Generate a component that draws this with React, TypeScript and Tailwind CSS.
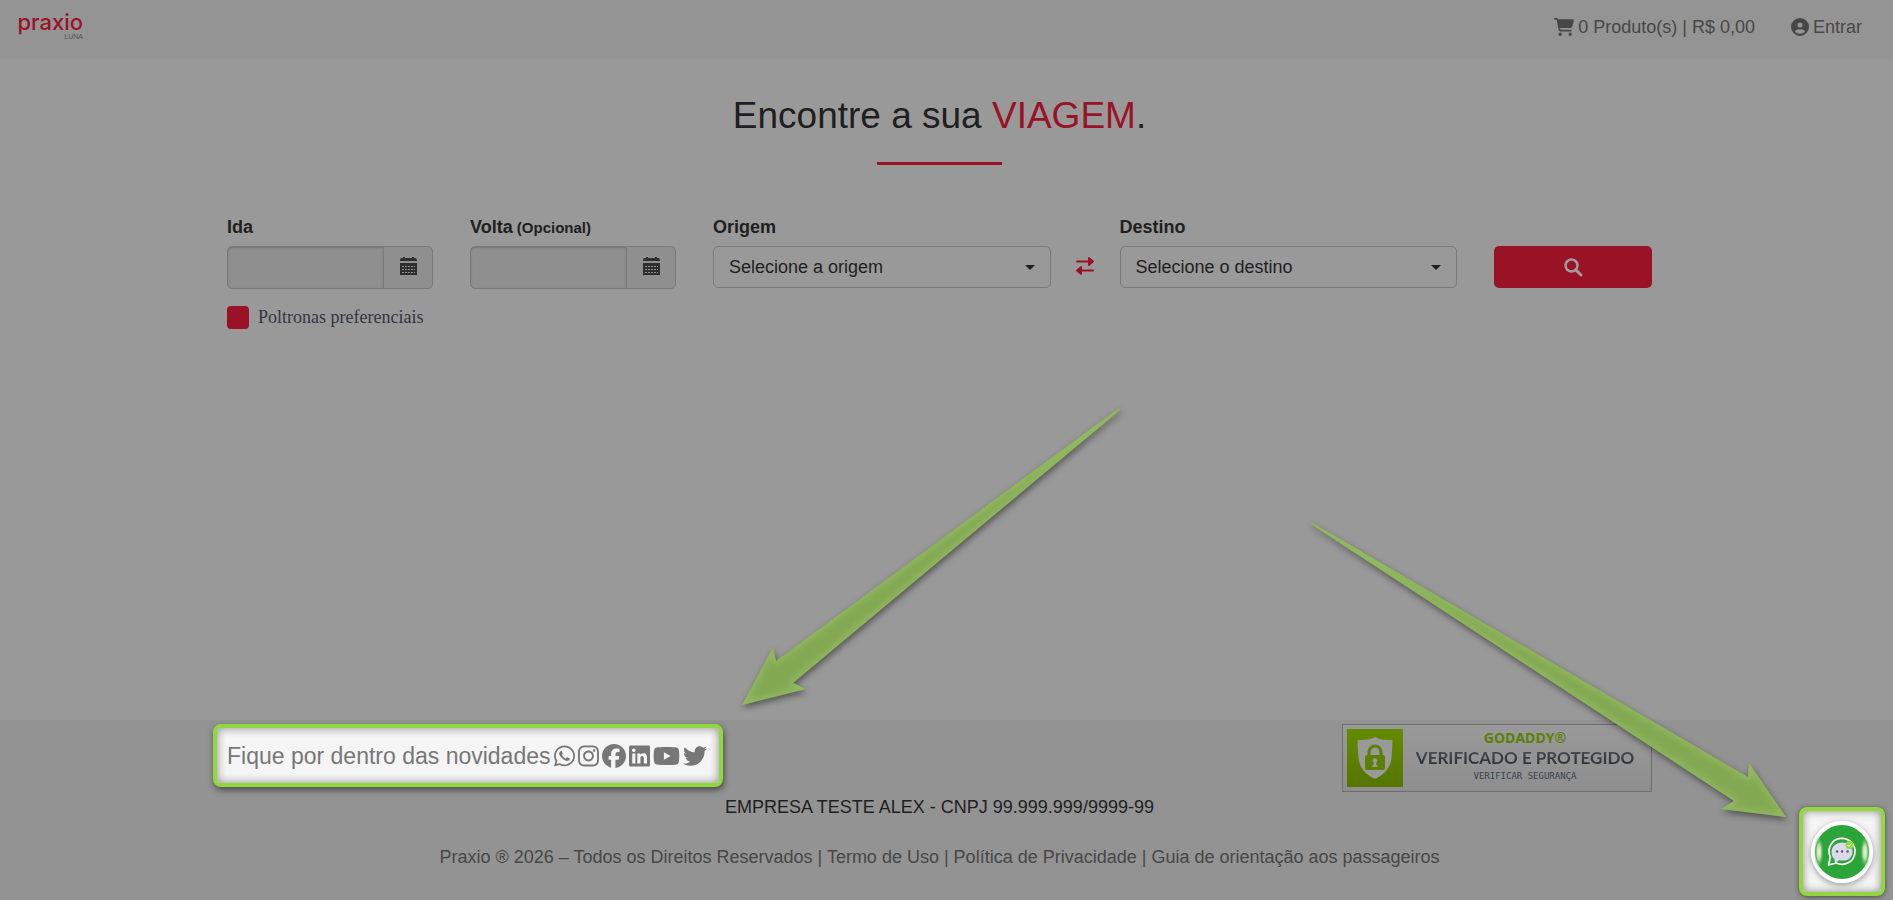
import clsx from "clsx";
import { FaCartShopping, FaCircleUser, FaFacebook, FaInstagram, FaLinkedin, FaTwitter, FaWhatsapp, FaYoutube } from "react-icons/fa6";

interface DateFieldProps {
    id: string;
    label: string;
    hint?: string;
}

interface SelectFieldProps {
    id: string;
    label: string;
    placeholder: string;
}

interface ArrowProps {
    id: string;
    points: string;
}

const labelStyle = "block text-lg leading-6 font-bold text-[#1f1f1f] mb-[7px]";

const socials = [
    { name: "WhatsApp", Icon: FaWhatsapp, size: "w-[21px]" },
    { name: "Instagram", Icon: FaInstagram, size: "w-[21px]" },
    { name: "Facebook", Icon: FaFacebook, size: "w-6" },
    { name: "LinkedIn", Icon: FaLinkedin, size: "w-[21px]" },
    { name: "YouTube", Icon: FaYoutube, size: "w-[27px]" },
    { name: "Twitter", Icon: FaTwitter, size: "w-6" },
];

const footerLinks = ["Termo de Uso", "Política de Privacidade", "Guia de orientação aos passageiros"];

const CalendarIcon = () => (
    <svg viewBox="0 0 17 18" className="w-[17px] h-[18px] fill-[#2e2e2e]" aria-hidden="true">
        <path d="M0 4V3a2 2 0 0 1 2-2h1V0h2v1h7V0h2v1h1a2 2 0 0 1 2 2v1z" />
        <path d="M0 6h17v12H0z" />
        <path
            d="M2 9.500h13M2 12.500h13M2 15.500h13"
            className="stroke-[#909090]"
            strokeWidth="1"
            strokeDasharray="2 1"
        />
    </svg>
);

const SwapIcon = () => (
    <svg viewBox="0 0 18 18" className="w-[18px] h-[18px] fill-[#9a1226]" aria-hidden="true">
        <path d="M1 3.500h11V1c0-.9.8-1.200 1.400-.7l4.200 3.500c.5.500.5 1 0 1.400l-4.200 3.500c-.6.500-1.400.2-1.400-.6V5.500H1a1 1 0 0 1 0-2z" />
        <path d="M17 12.500H6V10c0-.9-.8-1.200-1.400-.7L.4 12.800c-.5.500-.5 1 0 1.400l4.200 3.500c.6.500 1.400.2 1.400-.6v-2.600h11a1 1 0 0 0 0-2z" />
    </svg>
);

const DateField = ({ id, label, hint }: DateFieldProps) => {
    return (
        <div className="min-w-0">
            <label htmlFor={id} className={labelStyle}>
                {label}{hint && <span className="text-[15px] leading-none"> {hint}</span>}
            </label>
            <div className="flex h-[43px] rounded-[5px] border border-[#7a7a7a] bg-[#8f8f8f]">
                <input
                    id={id}
                    type="text"
                    readOnly
                    className="w-full min-w-0 flex-1 rounded-l px-3 text-lg outline-none shadow-[inset_0_1px_2px_#00000030]"
                />
                <button type="button" aria-label={`Abrir calendário: ${label}`} className="flex w-[49px] shrink-0 items-start justify-center border-l border-[#7a7a7a] pt-[10px]">
                    <CalendarIcon />
                </button>
            </div>
        </div>
    )
}

const SelectField = ({ id, label, placeholder }: SelectFieldProps) => {
    return (
        <div className="min-w-0">
            <label htmlFor={id} className={labelStyle}>{label}</label>
            <div className="relative">
                <select id={id} className="block h-[42px] w-full appearance-none rounded-[5px] border border-[#7a7a7a] bg-[#999999] px-[15px] text-lg leading-6 text-[#1f1f1f]">
                    <option>{placeholder}</option>
                </select>
                <svg viewBox="0 0 10 5" className="pointer-events-none absolute right-4 top-[19px] h-[5px] w-[10px] fill-[#1f1f1f]" aria-hidden="true">
                    <path d="M0 0h10L5 5z" />
                </svg>
            </div>
        </div>
    )
}

const SecuritySeal = () => {
    return (
        <a href="#seguranca" className="flex h-[68px] w-[310px] border border-[#6e6e6e] bg-linear-to-b from-[#999999] to-[#8e8e8e] p-1">
            <span className="flex h-[58px] w-14 items-center justify-center bg-linear-to-b from-[#648c00] to-[#557500]">
                <svg viewBox="0 0 36 42" className="h-[42px] w-9" aria-hidden="true">
                    <path d="M18 0c5 3 11 3 17.500 3 0 6-.5 12-1 18-.8 10-8 17-16.500 21C9.500 38 2.300 31 1.500 21 1 15 .5 9 .5 3 7 3 13 3 18 0z" fill="#999999" />
                    <path d="M12 20v-5a6 6 0 0 1 12 0v5" fill="none" stroke="#5c8000" strokeWidth="3" />
                    <rect x="8" y="18" width="20" height="15" rx="2" fill="#5c8000" />
                    <path d="M18 21a2.300 2.300 0 0 1 1.300 4.200V28H20.500v2h-5v-2h1.200v-2.800A2.300 2.300 0 0 1 18 21z" fill="#999999" />
                </svg>
            </span>
            <span className="flex flex-1 flex-col items-center pt-px font-['Open_Sans',sans-serif]">
                <span className="text-sm leading-4 font-bold text-[#5c8000]">GODADDY®</span>
                <span className="bg-linear-to-b from-[#4f555b] to-[#22272d] bg-clip-text font-['Lato',sans-serif] text-[17px] leading-6 font-bold whitespace-nowrap text-transparent">
                    VERIFICADO E PROTEGIDO
                </span>
                <span className="font-['DejaVu_Sans_Mono',monospace] text-[9px] leading-3 text-[#3b414b]">VERIFICAR SEGURANÇA</span>
            </span>
        </a>
    )
}

const ChatButton = () => {
    return (
        <div className="absolute right-2 bottom-1 flex h-[89px] w-[86px] items-center justify-center rounded-lg border-4 border-[#92d73d] bg-[#f5f5f5] shadow-[0_1px_5px_#00000080,inset_0_0_9px_#00000070]">
            <button type="button" aria-label="Abrir chat" className="rounded-full shadow-[0_2px_6px_#00000060]">
                <svg viewBox="0 0 62 62" className="h-[62px] w-[62px]" aria-hidden="true">
                    <defs>
                        <radialGradient id="chat-shine">
                            <stop offset="0" stopColor="#eef6e4" />
                            <stop offset="0.400" stopColor="#c3dcae" />
                            <stop offset="1" stopColor="#2ba537" stopOpacity="0" />
                        </radialGradient>
                    </defs>
                    <circle cx="31" cy="31" r="31" fill="#ffffff" />
                    <circle cx="31" cy="31" r="27" fill="#2ba537" />
                    <ellipse cx="8" cy="31" rx="5" ry="17" fill="url(#chat-shine)" />
                    <ellipse cx="54" cy="31" rx="5" ry="17" fill="url(#chat-shine)" />
                    <path d="M17.500 44l1.800-8a13 13 0 1 1 6 6z" fill="none" stroke="#ffffff" strokeWidth="1.700" strokeLinejoin="round" />
                    <path d="M24 42.500l-.5-4.500C18 33 20 22 31 21.500c12 0 14 14 5 17.500-3 1-6 .5-8 .3z" fill="#dcdaea" />
                    <path d="M26 30.500h.1M31 30.500h.1M36.500 30.500h.1" stroke="#5d5b7a" strokeWidth="2.500" strokeLinecap="round" />
                    <circle cx="38.500" cy="24" r="4" fill="#92d73d" />
                    <path d="M36.500 24l1.500 1.500 2.500-3" fill="none" stroke="#ffffff" />
                </svg>
            </button>
        </div>
    )
}

const Arrow = ({ id, points }: ArrowProps) => (
    <g className="drop-shadow-[1px_3px_3px_#00000070]">
        <clipPath id={id}>
            <polygon points={points} />
        </clipPath>
        <polygon points={points} fill="#83a852" />
        <g clipPath={`url(#${id})`}>
            <polygon points={points} fill="none" stroke="#93bd62" strokeWidth="5" filter="url(#soften)" />
        </g>
    </g>
);

export default function App() {
    return (
        <div className="relative flex min-h-screen flex-col overflow-hidden bg-[#999999] font-['Liberation_Sans',Arial,sans-serif] text-lg leading-6 text-[#474747]">
            <header className="flex h-[59px] items-start justify-between bg-[#949494] pt-[15px] pr-[31px] pl-4">
                <a href="#inicio" className="flex w-[67px] flex-col items-end text-[#9a1226]">
                    <span className="font-['Inter',sans-serif] text-[22px] leading-[14px] font-medium">praxio</span>
                    <span className="mt-1 text-[7px] leading-2 text-[#555555]">LUNA</span>
                </a>
                <nav className="flex gap-9">
                    <a href="#carrinho" className="flex items-center gap-1">
                        <FaCartShopping className="h-[18px] w-5" />
                        0 Produto(s) | R$ 0,00
                    </a>
                    <a href="#entrar" className="flex items-center gap-1">
                        <FaCircleUser className="h-[18px] w-[18px]" />
                        Entrar
                    </a>
                </nav>
            </header>

            <main className="flex-1 pr-[14px]">
                <div className="mx-auto max-w-[1425px]">
                    <h1 className="pt-9 text-center text-[37px] leading-[42px] text-[#1f1f1f]">
                        Encontre a sua <span className="text-[#9a1226]">VIAGEM</span>.
                    </h1>
                    <div className="mx-auto mt-[25px] h-[3px] w-[125px] bg-[#9a1226]"></div>

                    <form className="mt-[50px]">
                        <div className="grid grid-cols-[206fr_206fr_744fr_158fr] gap-x-[37px]">
                            <DateField id="ida" label="Ida" />
                            <DateField id="volta" label="Volta" hint="(Opcional)" />
                            <div className="grid min-w-0 grid-cols-[1fr_69px_1fr]">
                                <SelectField id="origem" label="Origem" placeholder="Selecione a origem" />
                                <button type="button" aria-label="Inverter origem e destino" className="flex items-start justify-center pt-[42px]">
                                    <SwapIcon />
                                </button>
                                <SelectField id="destino" label="Destino" placeholder="Selecione o destino" />
                            </div>
                            <button type="submit" aria-label="Buscar" className="mt-[31px] flex h-[42px] items-center justify-center rounded-[5px] bg-[#9a1226]">
                                <svg viewBox="0 0 19 19" className="h-[19px] w-[19px] fill-none stroke-[#a39a9b]" aria-hidden="true">
                                    <circle cx="7.500" cy="7.500" r="6" strokeWidth="2.500" />
                                    <path d="M12 12l5 5" strokeWidth="3" strokeLinecap="round" />
                                </svg>
                            </button>
                        </div>
                        <label className="mt-4 flex w-max items-center gap-[9px] font-['Liberation_Serif',serif] text-[#34363f]">
                            <input type="checkbox" className="h-[23px] w-[22px] appearance-none rounded bg-[#9a1226]" />
                            Poltronas preferenciais
                        </label>
                    </form>
                </div>
            </main>

            <footer className="h-[180px] bg-[#939393] pt-1 pr-[14px]">
                <div className="mx-auto max-w-[1425px]">
                    <div className="flex items-start justify-between">
                        <div className="-ml-[14px] flex h-[63px] items-center gap-[3px] rounded-lg border-4 border-[#92d73d] bg-[#f5f5f5] pr-3 pl-[10px] text-[#777777] shadow-[1px_3px_6px_#00000080,inset_0_0_10px_#00000070]">
                            <span className="text-[23px]">Fique por dentro das novidades</span>
                            {socials.map(({ name, Icon, size }) => (
                                <a key={name} href={`#${name.toLowerCase()}`} aria-label={name}>
                                    <Icon className={clsx("h-6", size)} />
                                </a>
                            ))}
                        </div>
                        <SecuritySeal />
                    </div>
                    <p className="mt-[3px] text-center text-[#1f1f1f]">EMPRESA TESTE ALEX - CNPJ 99.999.999/9999-99</p>
                    <p className="mt-[26px] text-center">
                        Praxio ® 2026 – Todos os Direitos Reservados
                        {footerLinks.map((link) => (
                            <span key={link}> | <a href="#rodape">{link}</a></span>
                        ))}
                    </p>
                </div>
            </footer>

            <ChatButton />

            {/* callout arrows */}
            <svg viewBox="0 0 1893 900" className="pointer-events-none absolute inset-0 h-full w-full" aria-hidden="true">
                <defs>
                    <filter id="soften">
                        <feGaussianBlur stdDeviation="3" />
                    </filter>
                </defs>
                <Arrow id="arrow-social" points="1119,408 776,661 773,647 742,705 806,689 793,683 1120,410" />
                <Arrow id="arrow-chat" points="1311,522 1748,777 1749,763 1786,817 1721,809 1734,801 1311,524" />
            </svg>
        </div>
    )
}
